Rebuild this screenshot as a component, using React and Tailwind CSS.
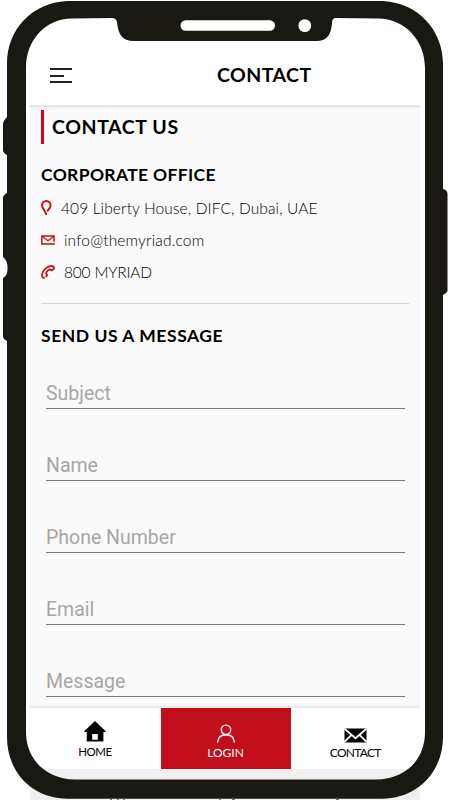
import React from 'react';

const FIELDS = ['Subject', 'Name', 'Phone Number', 'Email', 'Message'];

function PhoneFrame() {
  return (
    <svg className="pointer-events-none absolute inset-0" width="450" height="800" viewBox="0 0 450 800" aria-hidden="true">
      <path
        fill="#191813"
        fillRule="evenodd"
        d="M67 1H383C419 3 443 31 443 64V189Q447.500 190 447.500 194V291Q447 293 443 295V737C443 773 416 798.700 382 798.700H68C33 798.700 7 773 7 737V341Q3 339 3 336V278Q7 276 7.500 270V266Q7 260 3 257V198Q3 195 7 193V155Q3 153 3 150V124Q3 121 7 117V64C7 29 32 3 67 1Z
        M72 18.500C45 19 26 40 26 68V732C26 760 47 779.500 75 779.500H376C405 779.500 425 760 425 732V68C425 40 405 19 378 18.500L336 18Q332 18 332 23C331 35 327 41 316 41H134C122 41 118 34 117 22Q116 18 112 18Z"
      />
      <rect x="180.500" y="20.300" width="94.500" height="10.400" rx="5.200" fill="#fff" />
      <circle cx="304.800" cy="25.600" r="6.400" fill="#fff" />
      <g fill="#777">
        <rect x="110" y="799" width="2" height="1" />
        <rect x="117" y="799" width="2" height="1" />
        <rect x="123" y="799" width="2" height="1" />
        <rect x="219" y="799" width="2" height="1" />
        <rect x="232" y="799" width="3" height="1" />
        <rect x="336" y="799" width="3" height="1" />
      </g>
    </svg>
  );
}

function PinIcon() {
  return (
    <svg width="11" height="16" viewBox="0 0 11 16" fill="none" stroke="#c40d18" strokeWidth="1.900">
      <path d="M5.300 15C5 11.500 1 8.500 1 5.300A4.300 4.300 0 0 1 9.600 5.300C9.600 8.200 7.600 9.800 6.200 11.300" />
    </svg>
  );
}

function MailIcon() {
  return (
    <svg width="14" height="10" viewBox="0 0 14 10" fill="none" stroke="#c40d18" strokeWidth="1.500">
      <path d="M13 6.800V.9H.9V9H13V8" />
      <path d="M1.200 1.200 7 5.700 12.700 1.200" strokeWidth="1.200" />
    </svg>
  );
}

function PhoneIcon() {
  return (
    <svg width="14" height="14" viewBox="0 0 14 14" fill="none" stroke="#c40d18" strokeWidth="1.700" strokeLinejoin="round" strokeLinecap="round">
      <path d="M3.200 12.800C1.500 12.500.7 11.200 1 9.500C1.500 5.500 6.500.8 10.700.9C12.300.9 13.100 2 13.100 3.700L10.800 5.600L8.600 4.200C7 5 5.500 6.800 4.900 8.300L6.400 10.400L5.200 11.400" />
    </svg>
  );
}

function HomeIcon() {
  return (
    <svg width="22" height="21" viewBox="0 0 22 21" fill="#000">
      <path fillRule="evenodd" d="M11 0 21.700 10.300V11H19.400V20.500H2.700V11H.3V10.300ZM8.200 13V18.800H13.800V13Z" />
    </svg>
  );
}

function UserIcon() {
  return (
    <svg width="20" height="20" viewBox="0 0 20 20" fill="none" stroke="#fff" strokeWidth="1.400" strokeLinecap="round">
      <circle cx="10" cy="5.800" r="4.700" />
      <path d="M1.700 18C2 13.500 5 10.700 10 10.700S18 13.500 18.300 18" />
    </svg>
  );
}

function EnvelopeIcon() {
  return (
    <svg width="23" height="15" viewBox="0 0 23 15">
      <rect x=".5" y=".5" width="22" height="14" fill="#000" />
      <path d="M.5.8 11.500 10.200 22.500.8M.5 13.800 7.300 7.200M22.500 13.800 15.700 7.200" fill="none" stroke="#fff" strokeWidth="1.800" />
    </svg>
  );
}

export default function App() {
  return (
    <div className="relative h-[800px] w-[450px] overflow-hidden bg-white px-[30px] font-['Lato',sans-serif] text-black">
      <div className="flex h-full w-[390px] flex-col">
        <header className="flex h-[105px] shrink-0 items-end bg-white pb-[19px] pl-5">
          <div className="mb-[3px] flex w-[22px] flex-col gap-[4.500px]">
            <span className="h-[2px] w-full bg-[#222]" />
            <span className="h-[2px] w-[14px] bg-[#222]" />
            <span className="h-[2px] w-full bg-[#222]" />
          </div>
          <h1 className="ml-[145px] whitespace-nowrap text-[19.500px] leading-[22px] font-bold tracking-[0.450px]">CONTACT</h1>
        </header>

        <main className="h-[603px] shrink-0 overflow-hidden border-t-2 border-[#e6e6e6] bg-[#fafafa] pl-[11px] shadow-[inset_0_2px_3px_-1px_#eeeeee,inset_0_-3px_2px_-1px_#e8e8e8]">
          <div className="mt-[3px] flex h-[34px] items-center border-l-[3px] border-[#c40d18] pl-2">
            <h2 className="whitespace-nowrap text-[19.500px] leading-6 font-bold tracking-[0.600px]">CONTACT US</h2>
          </div>

          <h3 className="mt-[19px] whitespace-nowrap text-[17.500px] leading-6 font-bold tracking-[0.340px]">CORPORATE OFFICE</h3>
          <div className="mt-1 flex h-8 items-center pt-px">
            <PinIcon />
            <span className="ml-[9px] whitespace-nowrap text-[15.500px] leading-6 font-light tracking-[0.120px]">409 Liberty House, DIFC, Dubai, UAE</span>
          </div>
          <div className="flex h-8 items-center pt-px">
            <MailIcon />
            <span className="ml-[9px] whitespace-nowrap text-[15.500px] leading-6 font-light tracking-[0.170px]">info@themyriad.com</span>
          </div>
          <div className="flex h-8 items-center pt-px">
            <PhoneIcon />
            <span className="ml-[9px] whitespace-nowrap text-[15.500px] leading-6 font-light tracking-[-0.200px]">800 MYRIAD</span>
          </div>

          <div className="mt-[16px] h-px w-[368px] bg-[#d2d2d2]" />
          <h3 className="mt-[20px] whitespace-nowrap text-[17.500px] leading-6 font-bold tracking-[0.550px]">SEND US A MESSAGE</h3>

          <form className="ml-[5px] flex w-[359px] flex-col gap-[24.100px] pt-[13px] font-['Roboto',sans-serif]">
            {FIELDS.map((label) => (
              <div key={label} className="h-[48px] shrink-0 border-b border-[#7d7d7d] pt-[20.500px] text-[19.500px] leading-6 text-[#a6a6a6]">{label}</div>
            ))}
          </form>
        </main>

        <nav className="flex h-[61px] shrink-0 bg-white text-[12px] leading-4">
          <div className="flex w-[130px] flex-col items-center pt-[13px]">
            <HomeIcon />
            <span className="mt-[2px] text-[11.500px] tracking-[-0.500px]">HOME</span>
          </div>
          <div className="ml-[0.500px] flex w-[130px] flex-col items-center bg-[#c20e1a] pt-[16px] text-white">
            <UserIcon />
            <span className="mt-[1px]">LOGIN</span>
          </div>
          <div className="flex w-[129.500px] flex-col items-center pt-[20px]">
            <EnvelopeIcon />
            <span className="mt-[2px] tracking-[-0.700px]">CONTACT</span>
          </div>
        </nav>
        <div className="h-[31px] shrink-0 bg-[#f0f0f0]" />
      </div>
      <PhoneFrame />
    </div>
  );
}
